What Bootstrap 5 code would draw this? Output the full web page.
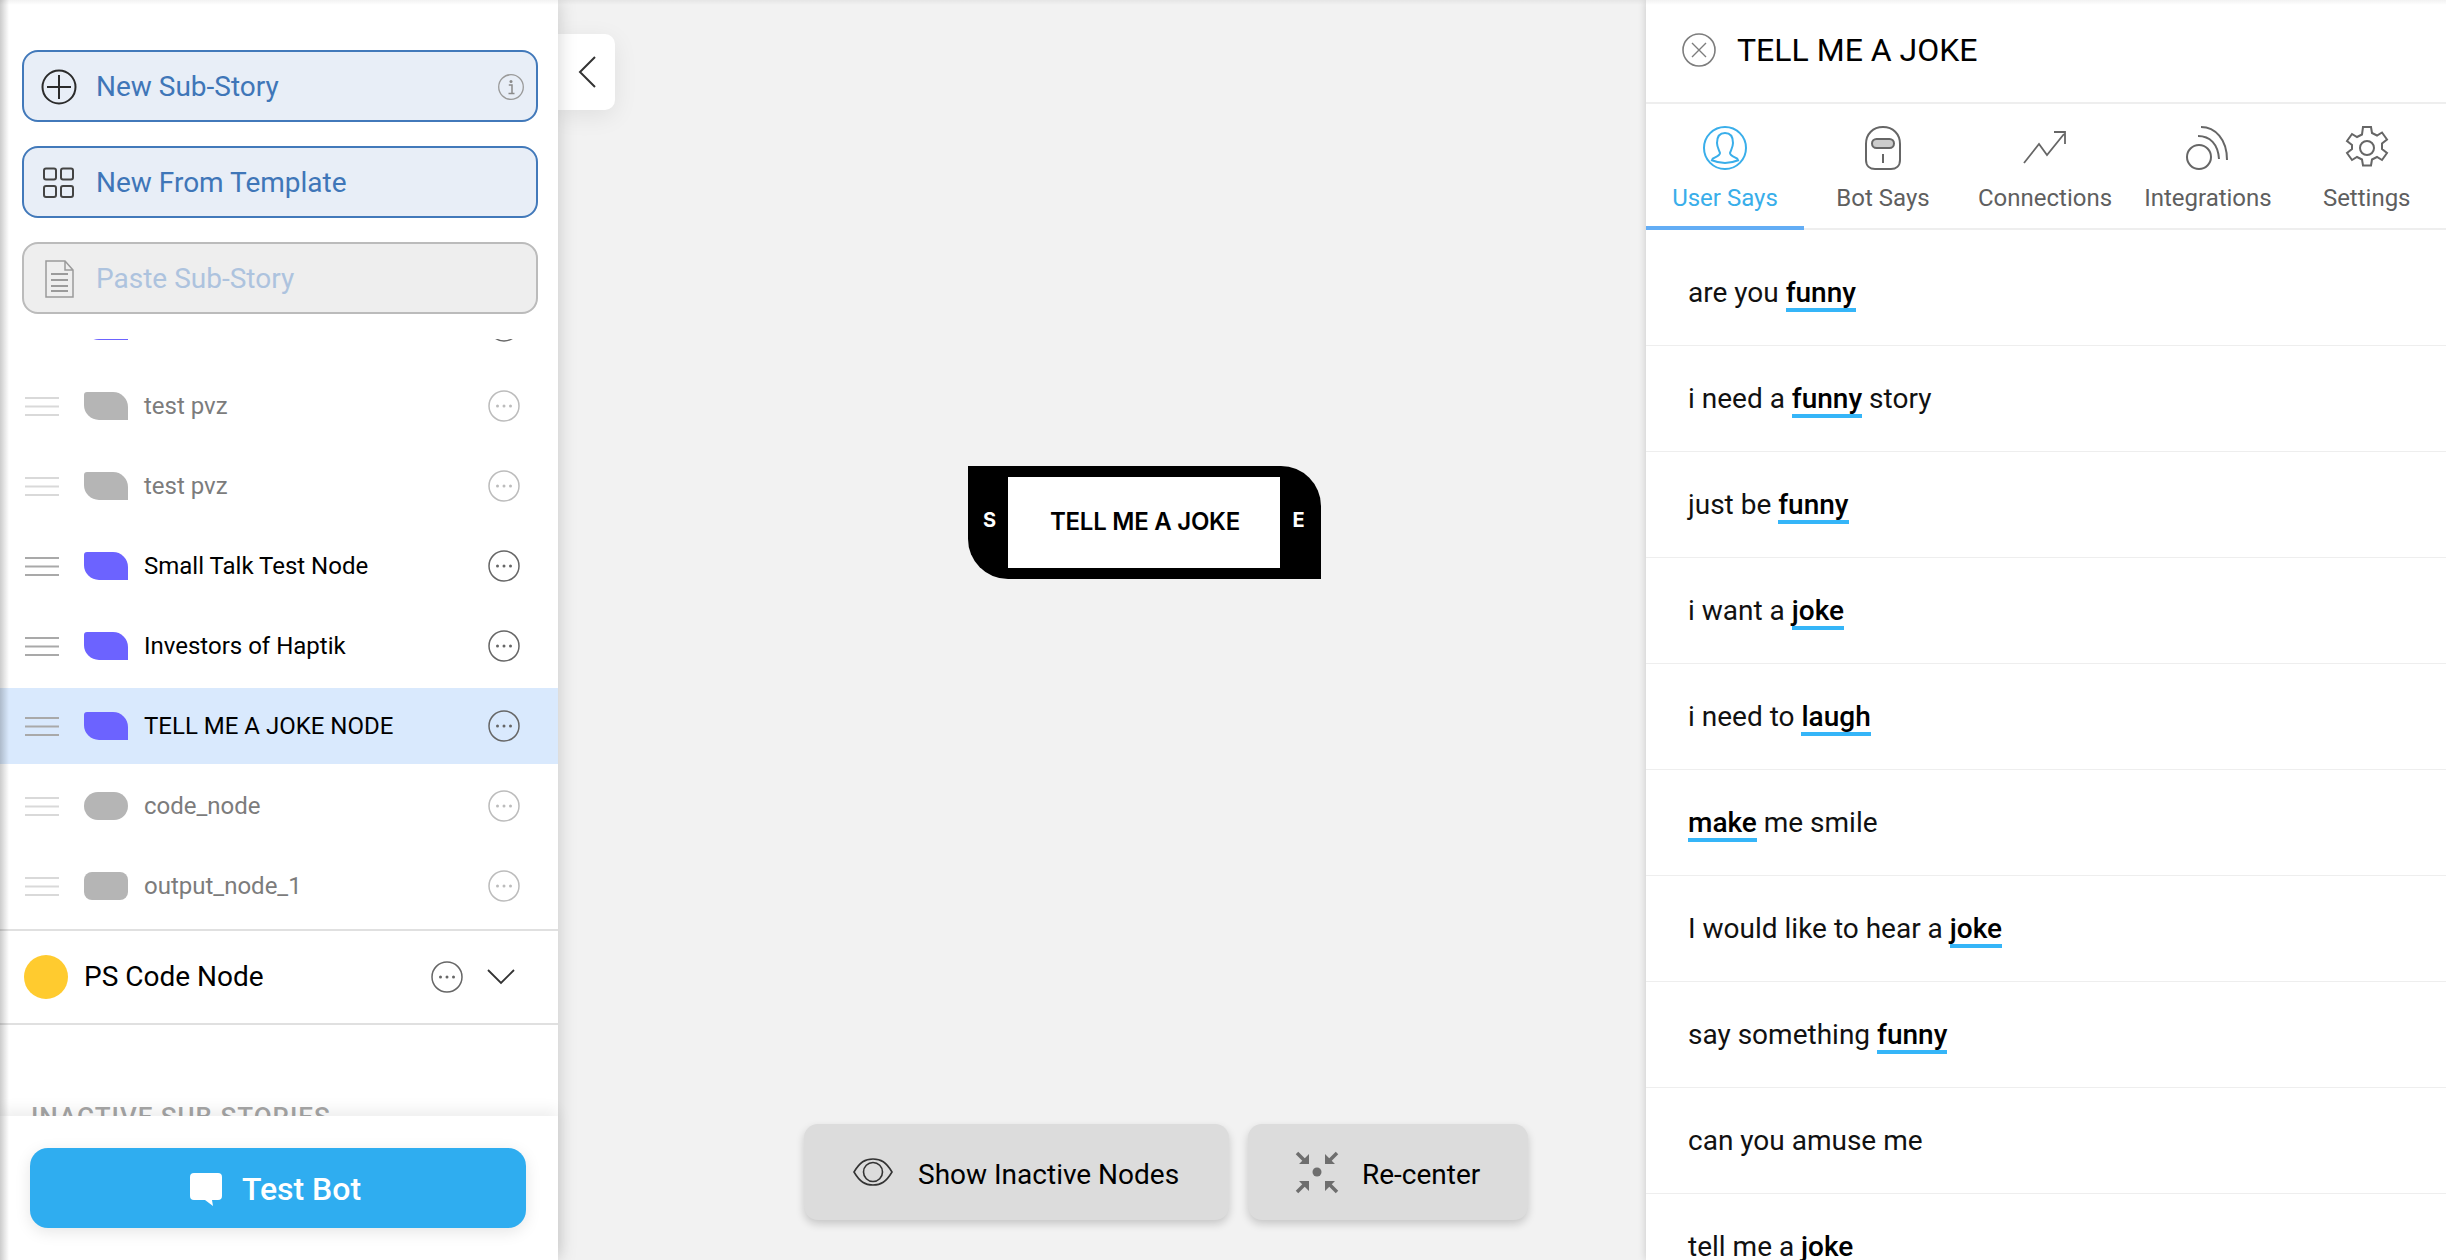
<!DOCTYPE html>
<html lang="en">
<head>
  <meta charset="UTF-8">
  <title>Story Builder</title>
  <link href="https://cdn.jsdelivr.net/npm/bootstrap@5.3.0/dist/css/bootstrap.min.css" rel="stylesheet">
  <style>
    html, body { height: 100%; }
    body {
      margin: 0;
      overflow: hidden;
      background: #f2f2f2;
      font-family: Roboto, "Liberation Sans", sans-serif;
      color: #111;
    }
    .app-shell { height: 1260px; width: 2446px; position: relative; }
    .app-shell::before {
      content: "";
      position: absolute;
      top: 0; left: 0; right: 0;
      height: 5px;
      background: linear-gradient(to bottom, rgba(0,0,0,.05), rgba(0,0,0,0));
      z-index: 3;
      pointer-events: none;
    }

    /* left panel */
    .side-panel {
      width: 558px;
      flex: none;
      background: #fff;
      box-shadow: 0 0 18px rgba(0, 0, 0, .18);
      position: relative;
      z-index: 2;
    }
    .side-panel::after {
      content: "";
      position: absolute;
      top: 0; bottom: 0; left: 0;
      width: 9px;
      background: linear-gradient(to right, rgba(0,0,0,.2), rgba(0,0,0,0));
      pointer-events: none;
    }
    .action-stack { padding: 50px 20px 25px 22px; gap: 24px; }
    .action-btn {
      height: 72px;
      border-radius: 16px;
      border: 2px solid #4279ba;
      background: #e8eef7;
      color: #3f76b8;
      font-size: 28px;
      line-height: 1;
      padding: 1px 12px 0 17px;
      gap: 19px;
    }
    .action-btn:hover { background: #e8eef7; color: #3f76b8; border-color: #4279ba; }
    .action-btn.muted-action { background: #eee; border-color: #bbb; color: #adc3de; }
    .action-icon { width: 36px; flex: none; display: block; }

    .story-scroll { flex: 1 1 0; min-height: 0; overflow: hidden; }
    .story-rows { margin-top: -51px; padding-bottom: 5px; gap: 4px; }
    .story-row {
      height: 76px;
      flex: none;
      padding: 0 38px 0 25px;
      font-size: 24px;
      color: #000;
    }
    .story-row.is-off { color: #7c7c7c; }
    .story-row.is-on { background: #d9e9fd; }
    .drag-lines { width: 34px; height: 19px; flex: none; color: #a9a9a9; display: block; }
    .is-off .drag-lines { color: #d9d9d9; }
    .node-chip { width: 44px; height: 28px; flex: none; margin: 0 16px 0 25px; background: #6c63ff; }
    .is-off .node-chip { background: #b5b5b5; }
    .chip-leaf { border-radius: 3px 15px 0 15px; }
    .chip-pill { border-radius: 14px; }
    .chip-box { border-radius: 8px; }
    .more-dots { width: 32px; height: 32px; flex: none; color: #666; display: block; }
    .is-off .more-dots { color: #bcbcbc; }

    .group-row {
      height: 96px;
      border-top: 2px solid #e0e0e0;
      border-bottom: 2px solid #e0e0e0;
      padding: 0 43px 0 24px;
      font-size: 28px;
      color: #000;
    }
    .group-dot { width: 44px; height: 44px; flex: none; border-radius: 50%; background: #ffcb2f; margin-right: 16px; }
    .group-chevron { width: 28px; height: 16px; flex: none; margin-left: 24px; display: block; }
    .inactive-title {
      margin: 77px 0 0 31px;
      font-size: 26px;
      line-height: 30px;
      font-weight: 500;
      color: #a6a6a6;
      letter-spacing: 1px;
    }
    .test-dock {
      height: 144px;
      flex: none;
      padding: 32px 32px 0 30px;
      background: #fff;
      box-shadow: 0 -6px 14px rgba(0, 0, 0, .07);
      position: relative;
    }
    .test-btn {
      height: 80px;
      border-radius: 18px;
      background: #2fadf0;
      border: 0;
      color: #fff;
      font-size: 32px;
      font-weight: 500;
      gap: 20px;
      padding: 2px 17px 0 12px;
      box-shadow: 0 4px 16px rgba(0, 0, 0, .1);
    }
    .test-btn:hover { background: #2fadf0; color: #fff; }

    /* canvas */
    .flow-canvas { flex: 1 1 0; position: relative; padding: 0 118px 40px 0; gap: 19px; }
    .collapse-tab {
      position: absolute;
      left: 0; top: 34px;
      width: 57px; height: 76px;
      background: #fff;
      border-radius: 0 10px 10px 0;
      box-shadow: 0 6px 24px rgba(0, 0, 0, .08);
    }
    .flow-node {
      position: absolute;
      left: 410px; top: 466px;
      width: 353px; height: 113px;
      background: #000;
      border-radius: 0 40px 0 40px;
      color: #fff;
      font-family: Inter, Roboto, sans-serif;
      font-size: 20px;
      font-weight: 700;
    }
    .port-label { width: 40px; padding-left: 3px; text-align: center; flex: none; line-height: 1; margin-top: -5px; }
    .port-end { width: 41px; padding: 0 4px 0 0; }
    .node-body {
      flex: 1 1 0;
      height: 91px;
      padding: 0 0 2px 2px;
      background: #fff;
      color: #000;
      font-size: 24px;
      font-weight: 600;
      letter-spacing: -.25px;
    }
    .canvas-btn {
      height: 96px;
      border-radius: 14px;
      border: 0;
      background: #dcdcdc;
      color: #000;
      font-size: 28px;
      box-shadow: 0 4px 8px rgba(0, 0, 0, .18);
    }
    .canvas-btn:hover { background: #dcdcdc; color: #000; }
    .canvas-btn span { padding-top: 5px; }
    .show-btn { width: 425px; gap: 25px; padding: 0 0 0 49px; }
    .center-btn { width: 280px; gap: 23px; padding: 0 0 0 47px; }

    /* right panel */
    .detail-panel {
      width: 800px;
      flex: none;
      background: #fff;
      box-shadow: 0 0 8px rgba(0, 0, 0, .18);
      position: relative;
      z-index: 2;
    }
    .detail-head { height: 104px; flex: none; padding: 0 0 3px 36px; border-bottom: 2px solid #eee; font-size: 32px; color: #000; gap: 21px; }
    .tab-strip { height: 126px; flex: none; border-bottom: 2px solid #eee; flex-wrap: nowrap; }
    .tab-link {
      flex: 0 0 auto;
      min-width: 158px;
      height: 126px;
      padding: 22px 16px 0;
      text-align: center;
      color: #5f5f5f;
      font-size: 24px;
      line-height: 30px;
      border-bottom: 4px solid transparent;
    }
    .tab-link:hover { color: #5f5f5f; }
    .tab-link.active, .tab-link.active:hover { color: #39aeea; border-bottom-color: #63adf5; }
    .tab-glyph { display: block; margin: 0 auto 13px; width: 48px; height: 44px; }
    .phrase-list { padding-top: 10px; }
    .phrase-item {
      height: 106px;
      padding: 0 0 0 42px;
      border: 0;
      border-bottom: 2px solid #eee;
      font-size: 28px;
      line-height: 36px;
      color: #111;
      display: flex;
      align-items: center;
      white-space: pre;
    }
    .phrase-key { font-weight: 500; color: #000; display: inline-block; position: relative; }
    .phrase-key::after {
      content: "";
      position: absolute;
      left: 0; right: 0; bottom: -1px;
      height: 4px;
      background: #35b5f8;
    }
  </style>
</head>
<body>
  <svg width="0" height="0" class="position-absolute">
    <symbol id="ico-more" viewBox="0 0 32 32">
      <circle cx="16" cy="16" r="15" fill="none" stroke="currentColor" stroke-width="1.5"/>
      <circle cx="9.5" cy="16" r="1.5" fill="currentColor"/>
      <circle cx="16" cy="16" r="1.5" fill="currentColor"/>
      <circle cx="22.5" cy="16" r="1.5" fill="currentColor"/>
    </symbol>
    <symbol id="ico-drag" viewBox="0 0 34 19">
      <path d="M0 1h34M0 9.500h34M0 18h34" stroke="currentColor" stroke-width="2" fill="none"/>
    </symbol>
  </svg>

  <div class="app-shell d-flex">
    <aside class="side-panel d-flex flex-column">
      <div class="action-stack d-flex flex-column">
        <button class="btn action-btn d-flex align-items-center w-100" type="button">
          <svg class="action-icon" height="36" viewBox="0 0 36 36"><circle cx="18" cy="18" r="16.500" fill="none" stroke="#2b2b2b" stroke-width="2"/><path d="M18 6v24M6 18h24" stroke="#2b2b2b" stroke-width="2" fill="none"/></svg>
          <span class="flex-grow-1 text-start">New Sub-Story</span>
          <svg width="26" height="26" viewBox="0 0 26 26"><circle cx="13" cy="13" r="12.300" fill="none" stroke="#9a9a9a" stroke-width="1.300"/><circle cx="13" cy="7.500" r="1.500" fill="#8a8a8a"/><path d="M10.800 11h3.200v8.300M10.500 19.500h6" stroke="#8a8a8a" stroke-width="1.500" fill="none"/></svg>
        </button>
        <button class="btn action-btn d-flex align-items-center w-100" type="button">
          <svg class="action-icon" height="34" viewBox="0 0 36 34"><g fill="none" stroke="#444" stroke-width="2"><rect x="3" y="2.500" width="12" height="11" rx="2"/><rect x="20" y="2.500" width="12" height="11" rx="2"/><rect x="3" y="20" width="12" height="11" rx="2"/><rect x="20" y="20" width="12" height="11" rx="2"/></g></svg>
          <span>New From Template</span>
        </button>
        <button class="btn action-btn muted-action d-flex align-items-center w-100" type="button">
          <svg class="action-icon" height="40" viewBox="0 0 36 40"><path d="M5 2h19l8 9v27H5z M24 2v9h8" fill="none" stroke="#9b9b9b" stroke-width="1.500"/><path d="M10 15h17M10 21h17M10 27h17M10 32h17" stroke="#9b9b9b" stroke-width="1.800"/></svg>
          <span>Paste Sub-Story</span>
        </button>
      </div>

      <div class="story-scroll">
        <div class="story-rows d-flex flex-column">
          <div class="story-row d-flex align-items-center"><svg class="drag-lines"><use href="#ico-drag"/></svg><span class="node-chip chip-leaf"></span><span class="flex-grow-1">Top Node</span><svg class="more-dots"><use href="#ico-more"/></svg></div>
          <div class="story-row is-off d-flex align-items-center"><svg class="drag-lines"><use href="#ico-drag"/></svg><span class="node-chip chip-leaf"></span><span class="flex-grow-1">test pvz</span><svg class="more-dots"><use href="#ico-more"/></svg></div>
          <div class="story-row is-off d-flex align-items-center"><svg class="drag-lines"><use href="#ico-drag"/></svg><span class="node-chip chip-leaf"></span><span class="flex-grow-1">test pvz</span><svg class="more-dots"><use href="#ico-more"/></svg></div>
          <div class="story-row d-flex align-items-center"><svg class="drag-lines"><use href="#ico-drag"/></svg><span class="node-chip chip-leaf"></span><span class="flex-grow-1">Small Talk Test Node</span><svg class="more-dots"><use href="#ico-more"/></svg></div>
          <div class="story-row d-flex align-items-center"><svg class="drag-lines"><use href="#ico-drag"/></svg><span class="node-chip chip-leaf"></span><span class="flex-grow-1">Investors of Haptik</span><svg class="more-dots"><use href="#ico-more"/></svg></div>
          <div class="story-row is-on d-flex align-items-center"><svg class="drag-lines"><use href="#ico-drag"/></svg><span class="node-chip chip-leaf"></span><span class="flex-grow-1">TELL ME A JOKE NODE</span><svg class="more-dots"><use href="#ico-more"/></svg></div>
          <div class="story-row is-off d-flex align-items-center"><svg class="drag-lines"><use href="#ico-drag"/></svg><span class="node-chip chip-pill"></span><span class="flex-grow-1">code_node</span><svg class="more-dots"><use href="#ico-more"/></svg></div>
          <div class="story-row is-off d-flex align-items-center"><svg class="drag-lines"><use href="#ico-drag"/></svg><span class="node-chip chip-box"></span><span class="flex-grow-1">output_node_1</span><svg class="more-dots"><use href="#ico-more"/></svg></div>
        </div>
        <div class="group-row d-flex align-items-center">
          <span class="group-dot"></span>
          <span class="flex-grow-1">PS Code Node</span>
          <svg class="more-dots"><use href="#ico-more"/></svg>
          <svg class="group-chevron" viewBox="0 0 28 16"><path d="M1 1l13 13L27 1" fill="none" stroke="#333" stroke-width="1.800"/></svg>
        </div>
        <div class="inactive-title text-nowrap">INACTIVE SUB STORIES</div>
      </div>

      <div class="test-dock">
        <button class="btn test-btn d-flex align-items-center justify-content-center w-100" type="button">
          <svg width="32" height="33" viewBox="0 0 32 33"><path d="M4 0h24a4 4 0 0 1 4 4v19a4 4 0 0 1-4 4h-6l1 6-8-6H4a4 4 0 0 1-4-4V4a4 4 0 0 1 4-4z" fill="#fff"/></svg>
          <span>Test Bot</span>
        </button>
      </div>
    </aside>

    <main class="flow-canvas d-flex align-items-end justify-content-end">
      <div class="collapse-tab d-flex align-items-center justify-content-center">
        <svg width="18" height="32" viewBox="0 0 18 32"><path d="M17 1L2 16l15 15" fill="none" stroke="#333" stroke-width="2"/></svg>
      </div>

      <div class="flow-node d-flex align-items-center">
        <span class="port-label">S</span>
        <div class="node-body d-flex align-items-center justify-content-center">TELL ME A JOKE</div>
        <span class="port-label port-end">E</span>
      </div>

      <button class="btn canvas-btn show-btn d-flex align-items-center" type="button">
        <svg width="40" height="28" viewBox="0 0 40 28"><path d="M1 14C7 4 12 1 20 1s13 3 19 13c-6 10-11 13-19 13S7 24 1 14z" fill="none" stroke="#333" stroke-width="1.600"/><ellipse cx="20" cy="14" rx="9.500" ry="9.500" fill="none" stroke="#333" stroke-width="1.600"/></svg>
        <span>Show Inactive Nodes</span>
      </button>
      <button class="btn canvas-btn center-btn d-flex align-items-center" type="button">
        <svg width="44" height="43" viewBox="0 0 44 43">
          <circle cx="22" cy="21" r="4.500" fill="#6e6e6e"/>
          <path d="M2 2l8 8M42 2l-8 8M2 41l8-8M42 41l-8-8" fill="none" stroke="#6e6e6e" stroke-width="3.500"/>
          <path d="M14 3v10H4z M30 3v10h10z M14 40V30H4z M30 40V30h10z" fill="#6e6e6e"/>
        </svg>
        <span>Re-center</span>
      </button>
    </main>

    <section class="detail-panel d-flex flex-column">
      <header class="detail-head d-flex align-items-center">
        <svg width="34" height="34" viewBox="0 0 34 34"><circle cx="17" cy="17" r="16" fill="none" stroke="#7d7d7d" stroke-width="1.600"/><path d="M10 10l14 14M24 10L10 24" stroke="#7d7d7d" stroke-width="1.400"/></svg>
        <span>TELL ME A JOKE</span>
      </header>

      <nav class="nav tab-strip">
        <a class="nav-link tab-link active" href="#">
          <svg class="tab-glyph" viewBox="0 0 48 44"><g fill="none" stroke="#39aeea" stroke-width="2"><ellipse cx="24" cy="22" rx="21" ry="21"/><path d="M24 7c-6 0-8 5-8 10 0 4 2 7 3 10 0 3-5 4-8 6M24 7c6 0 8 5 8 10 0 4-2 7-3 10 0 3 5 4 8 6M10 34c5 2 9 3 14 3s9-1 14-3"/></g></svg>
          User Says
        </a>
        <a class="nav-link tab-link" href="#">
          <svg class="tab-glyph" viewBox="0 0 48 44"><g fill="none" stroke="#666" stroke-width="2"><path d="M7 18C7 8 14 1 24 1s17 7 17 17v16c0 6-4 9-9 9H16c-5 0-9-3-9-9z"/><rect x="13" y="13" width="22" height="9" rx="4.500" fill="#ccc"/><path d="M24 28v9"/></g></svg>
          Bot Says
        </a>
        <a class="nav-link tab-link" href="#">
          <svg class="tab-glyph" viewBox="0 0 48 44"><path d="M3 37l15-19 8 11L43 8M33 6h11v12" fill="none" stroke="#666" stroke-width="1.800"/></svg>
          Connections
        </a>
        <a class="nav-link tab-link" href="#">
          <svg class="tab-glyph" viewBox="2 0 48 44"><g fill="none" stroke="#666" stroke-width="2"><ellipse cx="17" cy="31" rx="12" ry="12"/><path d="M16 10c12 0 20 8 21 23"/><path d="M19 1c14 0 26 12 26 33"/></g></svg>
          Integrations
        </a>
        <a class="nav-link tab-link" href="#">
          <svg class="tab-glyph" viewBox="0 0 48 44"><g fill="none" stroke="#666" stroke-width="2"><path d="M20 1h8l1 6 5 2.500 5-3 5 7-5 4v5.500l5 4-5 7-5-3-5 2.500-1 6h-8l-1-6-5-2.500-5 3-5-7 5-4V19l-5-4 5-7 5 3 5-2.500z"/><circle cx="24" cy="22" r="7"/></g></svg>
          Settings
        </a>
      </nav>

      <ul class="list-group list-group-flush phrase-list">
        <li class="list-group-item phrase-item">are you <span class="phrase-key">funny</span></li>
        <li class="list-group-item phrase-item">i need a <span class="phrase-key">funny</span> story</li>
        <li class="list-group-item phrase-item">just be <span class="phrase-key">funny</span></li>
        <li class="list-group-item phrase-item">i want a <span class="phrase-key">joke</span></li>
        <li class="list-group-item phrase-item">i need to <span class="phrase-key">laugh</span></li>
        <li class="list-group-item phrase-item"><span class="phrase-key">make</span> me smile</li>
        <li class="list-group-item phrase-item">I would like to hear a <span class="phrase-key">joke</span></li>
        <li class="list-group-item phrase-item">say something <span class="phrase-key">funny</span></li>
        <li class="list-group-item phrase-item">can you amuse me</li>
        <li class="list-group-item phrase-item">tell me a <span class="phrase-key">joke</span></li>
      </ul>
    </section>
  </div>

  <script src="https://cdn.jsdelivr.net/npm/bootstrap@5.3.0/dist/js/bootstrap.bundle.min.js"></script>
</body>
</html>
